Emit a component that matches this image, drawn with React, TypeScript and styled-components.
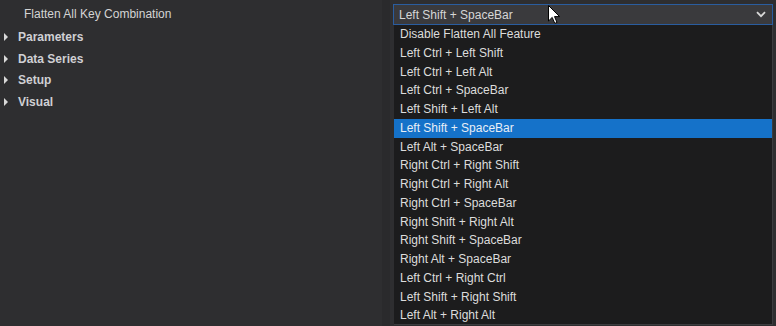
import React from 'react';
import styled, { createGlobalStyle } from 'styled-components';

// ------------------------------------------------------------------------------------------------

const GlobalStyle = createGlobalStyle`
  html, body {
    margin: 0;
    padding: 0;
    background: #2e2e30;
  }
  body {
    font-family: 'Liberation Sans', Arial, sans-serif;
    font-size: 12px;
    color: #d2d2d2;
  }
`;

const sections = ['Parameters', 'Data Series', 'Setup', 'Visual'];

const options = [
  'Disable Flatten All Feature',
  'Left Ctrl + Left Shift',
  'Left Ctrl + Left Alt',
  'Left Ctrl + SpaceBar',
  'Left Shift + Left Alt',
  'Left Shift + SpaceBar',
  'Left Alt + SpaceBar',
  'Right Ctrl + Right Shift',
  'Right Ctrl + Right Alt',
  'Right Ctrl + SpaceBar',
  'Right Shift + Right Alt',
  'Right Shift + SpaceBar',
  'Right Alt + SpaceBar',
  'Left Ctrl + Right Ctrl',
  'Left Shift + Right Shift',
  'Left Alt + Right Alt',
];

const selected = 'Left Shift + SpaceBar';

const App: React.FC = () => {
  return (
    <>
      <GlobalStyle />
      <Page>
        <PropertyRow>
          <Label>Flatten All Key Combination</Label>
          <Splitter />
          <SelectWrap>
            <SelectBox>
              <span>{selected}</span>
              <Chevron width="10" height="7" viewBox="0 0 10 7">
                <path d="M1 1.2 L5 5.2 L9 1.2" fill="none" stroke="#d8d8d8" strokeWidth="1.8" />
              </Chevron>
            </SelectBox>
            <Cursor width="13" height="20" viewBox="0 0 13 20">
              <path
                d="M0.5 0.5 L0.5 16 L4.2 12.4 L6.8 18.4 L9 17.4 L6.5 11.6 L11.6 11.6 Z"
                fill="#ffffff"
                stroke="#000000"
                strokeWidth="1"
              />
            </Cursor>
            <DropList>
              {options.map(opt => (
                <Option key={opt} data-active={opt === selected ? 'true' : 'false'}>
                  {opt}
                </Option>
              ))}
            </DropList>
          </SelectWrap>
        </PropertyRow>

        <Tree>
          {sections.map(name => (
            <Section key={name}>
              <Caret width="4" height="8" viewBox="0 0 4 8">
                <path d="M0 0 L4 4 L0 8 Z" fill="#d8d8d8" />
              </Caret>
              {name}
            </Section>
          ))}
        </Tree>
      </Page>
    </>
  );
};

export default App;

// ------------------------------------------------------------------------------------------------

const Page = styled.div`
  width: 776px;
  height: 326px;
  overflow: hidden;
  display: flex;
  flex-direction: column;
`;

const PropertyRow = styled.div`
  display: flex;
  align-items: flex-start;
  height: 26px;
  padding-top: 4px;
  box-sizing: border-box;
`;

const Label = styled.div`
  width: 382px;
  padding-left: 24px;
  box-sizing: border-box;
  line-height: 21px;
  color: #d4d4d4;
`;

const Splitter = styled.div`
  width: 8px;
  height: 326px;
  margin-top: -4px;
  background: #2a2a2c;
  flex-shrink: 0;
`;

const SelectWrap = styled.div`
  position: relative;
  margin-left: 3px;
  width: 380px;
`;

const SelectBox = styled.div`
  height: 21px;
  box-sizing: border-box;
  border: 1px solid #2a5d9f;
  background: #3a3a3d;
  display: flex;
  align-items: center;
  justify-content: space-between;
  padding: 0 6px 0 5px;
  color: #d6d6d6;
`;

const Chevron = styled.svg`
  display: block;
`;

const Cursor = styled.svg`
  position: absolute;
  left: 155px;
  top: 1px;
  z-index: 3;
`;

const DropList = styled.div`
  position: absolute;
  top: 21px;
  left: 1px;
  right: 0;
  height: 300px;
  box-sizing: border-box;
  background: #1c1c1d;
  border-right: 1px solid #3c3c3f;
  border-bottom: 1px solid #3c3c3f;
  display: flex;
  flex-direction: column;
  z-index: 2;
`;

const Option = styled.div`
  height: 18.75px;
  line-height: 18.75px;
  padding-left: 6px;
  color: #dcdcdc;
  white-space: nowrap;

  &[data-active='true'] {
    background: #1572c9;
    color: #e8eef6;
  }
`;

const Tree = styled.div`
  display: flex;
  flex-direction: column;
  width: 382px;
`;

const Section = styled.div`
  height: 21.7px;
  display: flex;
  align-items: center;
  gap: 10px;
  padding-left: 4px;
  font-weight: bold;
  color: #d0d0d4;
`;

const Caret = styled.svg`
  display: block;
  flex-shrink: 0;
`;
